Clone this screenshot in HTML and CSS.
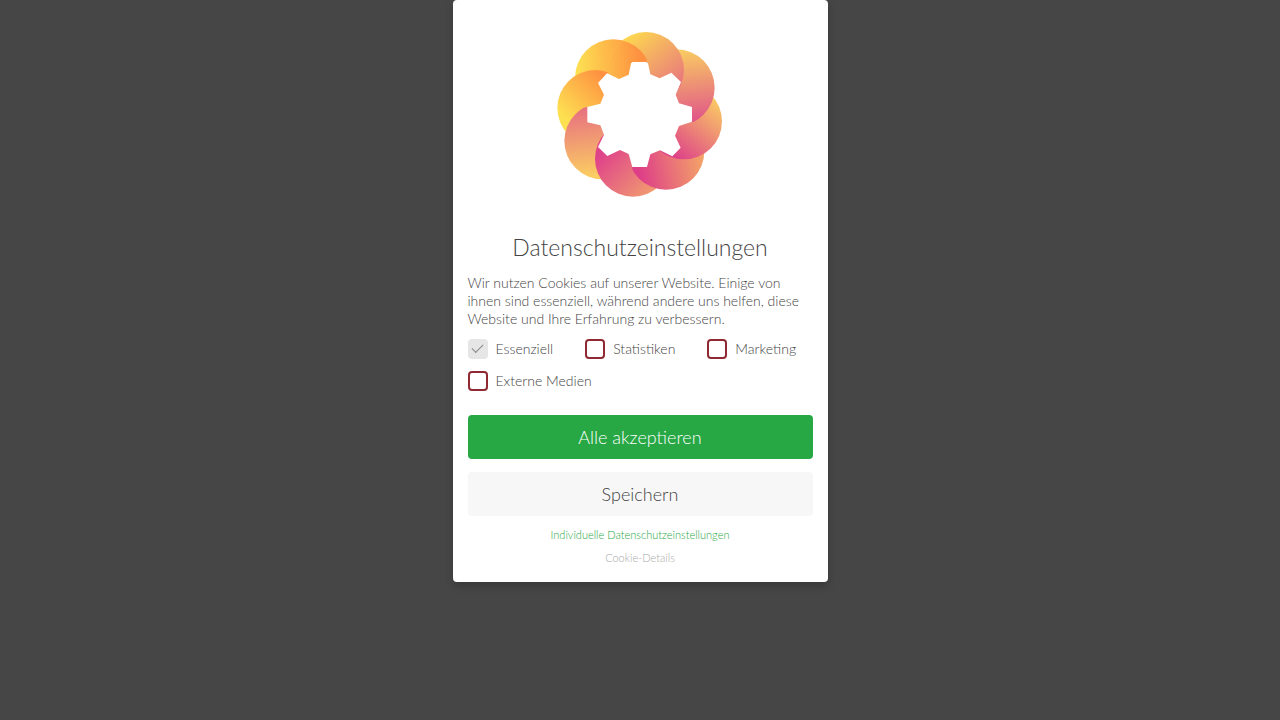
FILE: index.html
```html
<!DOCTYPE html>
<html lang="de">
<head>
  <meta charset="UTF-8">
  <meta name="viewport" content="width=device-width, initial-scale=1.0">
  <title>Datenschutzeinstellungen</title>
  <link rel="stylesheet" href="styles.css">
</head>
<body>
  <main class="overlay">
    <form class="cookie-box">
      <svg class="logo" viewBox="0 0 570 570" aria-hidden="true">
        <defs>
          <linearGradient id="g1" gradientUnits="userSpaceOnUse" x1="250" y1="45" x2="390" y2="215">
            <stop offset="0" stop-color="#fdd850"/><stop offset="1" stop-color="#e8747f"/>
          </linearGradient>
          <linearGradient id="g2" gradientUnits="userSpaceOnUse" x1="425" y1="90" x2="450" y2="310">
            <stop offset="0" stop-color="#f9cb62"/><stop offset="1" stop-color="#e0528a"/>
          </linearGradient>
          <linearGradient id="g3" gradientUnits="userSpaceOnUse" x1="525" y1="250" x2="390" y2="410">
            <stop offset="0" stop-color="#fac964"/><stop offset="1" stop-color="#de4289"/>
          </linearGradient>
          <linearGradient id="g4" gradientUnits="userSpaceOnUse" x1="280" y1="450" x2="475" y2="415">
            <stop offset="0" stop-color="#de3e88"/><stop offset="1" stop-color="#f4a468"/>
          </linearGradient>
          <linearGradient id="g5" gradientUnits="userSpaceOnUse" x1="175" y1="395" x2="310" y2="530">
            <stop offset="0" stop-color="#df438a"/><stop offset="1" stop-color="#f19a70"/>
          </linearGradient>
          <linearGradient id="g6" gradientUnits="userSpaceOnUse" x1="105" y1="275" x2="125" y2="470">
            <stop offset="0" stop-color="#e8747f"/><stop offset="1" stop-color="#fbcd62"/>
          </linearGradient>
          <linearGradient id="g7" gradientUnits="userSpaceOnUse" x1="175" y1="170" x2="55" y2="290">
            <stop offset="0" stop-color="#fe9241"/><stop offset="1" stop-color="#fde052"/>
          </linearGradient>
          <linearGradient id="g8" gradientUnits="userSpaceOnUse" x1="95" y1="120" x2="280" y2="110">
            <stop offset="0" stop-color="#fde052"/><stop offset="1" stop-color="#fe9241"/>
          </linearGradient>
          <clipPath id="overlap"><circle cx="303" cy="150" r="114"/></clipPath>
          <clipPath id="upper"><path d="M0 0H570V306H0Z"/></clipPath>
          <clipPath id="right"><path d="M262 0H570V570H262Z"/></clipPath>
          <clipPath id="lower"><path d="M0 262H570V570H0Z"/></clipPath>
          <clipPath id="left"><path d="M0 0H306V570H0Z"/></clipPath>
        </defs>
        <circle cx="205" cy="173" r="115" fill="url(#g8)" clip-path="url(#left)"/>
        <circle cx="151" cy="264" r="114" fill="url(#g7)"/>
        <circle cx="173" cy="363" r="115" fill="url(#g6)" clip-path="url(#lower)"/>
        <circle cx="264" cy="416" r="114" fill="url(#g5)"/>
        <circle cx="363" cy="394" r="115" fill="url(#g4)" clip-path="url(#right)"/>
        <circle cx="417" cy="304" r="114" fill="url(#g3)"/>
        <circle cx="394" cy="203" r="115" fill="url(#g2)" clip-path="url(#upper)"/>
        <circle cx="303" cy="150" r="114" fill="url(#g1)"/>
        <g clip-path="url(#left)">
          <circle cx="205" cy="173" r="115" fill="url(#g8)" clip-path="url(#overlap)"/>
        </g>
        <!-- gear -->
        <path fill="#fff" d="M263 126H303L309 130 316 163 344 175 379 158 408 186 392 224 402 250 441 261V305L402 318 390 347 407 383 382 409 345 391 316 403 306 441H262L251 402 225 390 187 408 159 381 177 344 166 316 127 307V261L166 251 177 224 159 189 186 160 222 177 251 164 258 130Z"/>
      </svg>

      <h1>Datenschutzeinstellungen</h1>
      <p class="intro">Wir nutzen Cookies auf unserer Website. Einige von ihnen sind essenziell, während andere uns helfen, diese Website und Ihre Erfahrung zu verbessern.</p>

      <div class="options">
        <label><input type="checkbox" checked disabled>Essenziell</label>
        <label><input type="checkbox">Statistiken</label>
        <label><input type="checkbox">Marketing</label>
        <label><input type="checkbox">Externe Medien</label>
      </div>

      <button type="button" class="btn btn-accept">Alle akzeptieren</button>
      <button type="submit" class="btn btn-save">Speichern</button>

      <a href="#" class="link link-individual">Individuelle Datenschutzeinstellungen</a>
      <a href="#" class="link link-details">Cookie-Details</a>
    </form>
  </main>
</body>
</html>
```
FILE: styles.css
```css
* {
  padding: 0;
  margin: 0;
  box-sizing: border-box;
}

body {
  background-color: #464646;
  color: #444;
  font-family: Lato, "Open Sans", sans-serif;
  font-weight: 300;
}

.overlay {
  display: flex;
  justify-content: center;
  align-items: flex-start;
  min-height: 100vh;
}

.cookie-box {
  display: flex;
  flex-direction: column;
  width: 100%;
  max-width: 375px;
  padding: 20px 15px 17px;
  background-color: #fff;
  border-radius: 4px;
  box-shadow: 0 4px 8px rgba(0, 0, 0, 0.2);
}

.logo {
  width: 190px;
  height: 190px;
  align-self: center;
}

h1 {
  margin-top: 22px;
  font-size: 23px;
  font-weight: 300;
  line-height: 30px;
  text-align: center;
}

.intro {
  margin-top: 12px;
  font-size: 14px;
  line-height: 18px;
}

.options {
  display: flex;
  flex-wrap: wrap;
  gap: 12px 32px;
  margin: 11px 0 24px;
}

.options label {
  display: flex;
  align-items: center;
  gap: 8px;
  font-size: 14px;
  line-height: 20px;
}

.options input {
  display: grid;
  place-items: center;
  width: 20px;
  height: 20px;
  appearance: none;
  border: 2px solid #8f2a33;
  border-radius: 4px;
  background-color: #fff;
}

.options input:checked {
  border-color: #e6e6e6;
  background-color: #e6e6e6;
}

.options input:checked::after {
  content: "";
  width: 10px;
  height: 5px;
  margin-bottom: 4px;
  border: solid #888;
  border-width: 0 0 1px 1px;
  transform: rotate(-45deg);
}

.btn {
  height: 44px;
  border: none;
  border-radius: 4px;
  font-family: inherit;
  font-size: 18px;
  font-weight: 300;
  cursor: pointer;
}

.btn-accept {
  background-color: #28a745;
  color: #fff;
}

.btn-save {
  margin-top: 13px;
  background-color: #f7f7f7;
  color: #444;
}

.link {
  align-self: center;
  font-size: 11px;
  line-height: 15px;
  text-decoration: none;
}

.link-individual {
  margin-top: 11px;
  color: #28a745;
}

.link-details {
  margin-top: 8px;
  color: #aaa;
}
```
